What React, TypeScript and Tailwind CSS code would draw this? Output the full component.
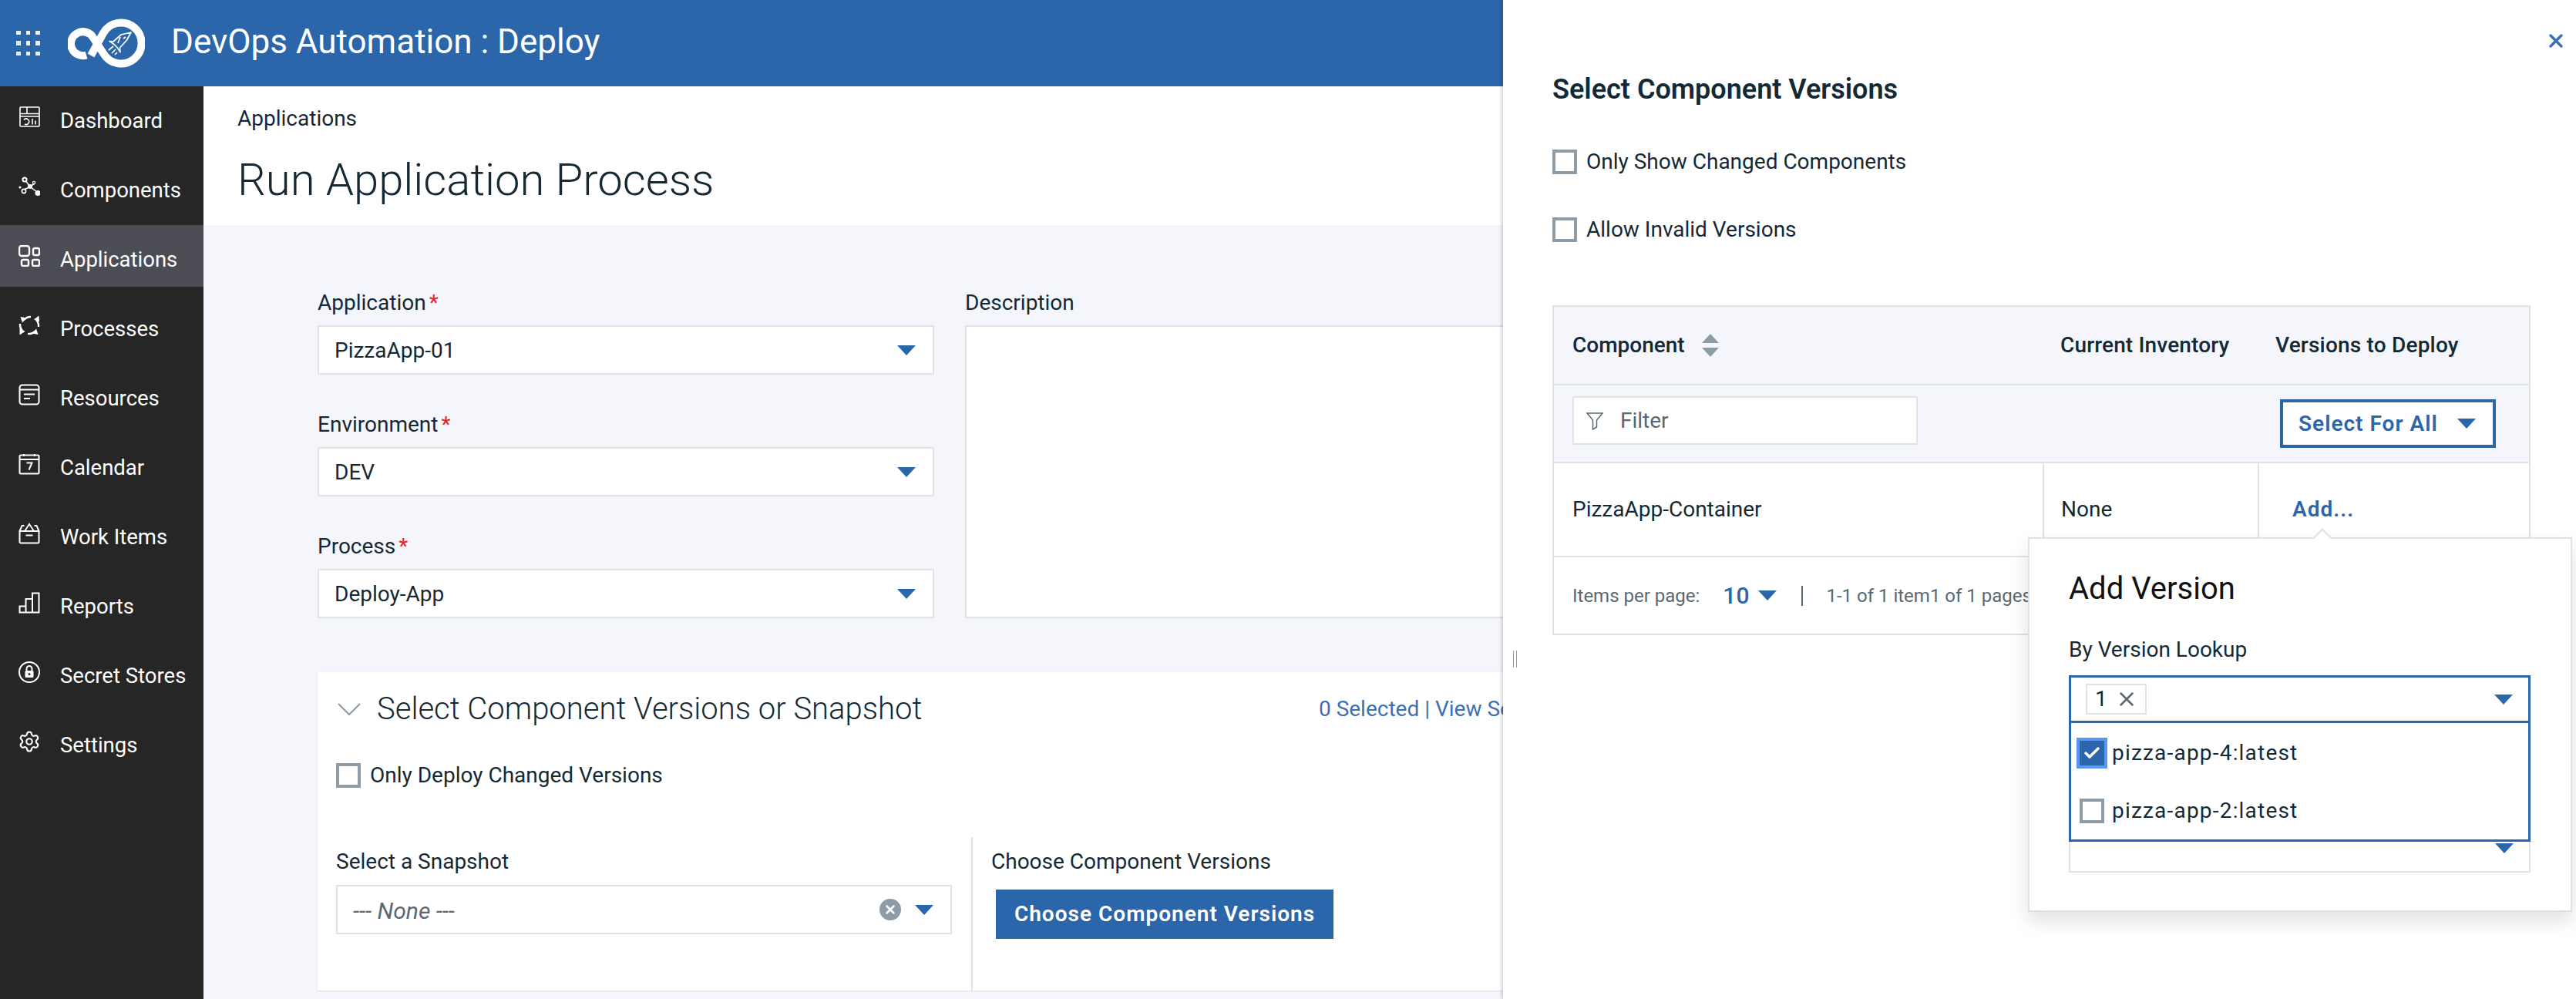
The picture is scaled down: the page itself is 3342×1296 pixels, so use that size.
import { Settings, X, Check } from "lucide-react";
import type { ReactNode } from "react";

const BLUE = "#2b65aa";

function Caret({ className = "" }: { className?: string }) {
	return (
		<svg viewBox="0 0 24 13" className={`w-[24px] h-[13px] shrink-0 ${className}`}>
			<polygon points="0,0 24,0 12,13" fill={BLUE} />
		</svg>
	);
}

function Box({ children }: { children: ReactNode }) {
	return (
		<svg viewBox="0 0 28 28" className="w-[28px] h-[28px] shrink-0 mb-[10px]" fill="none" stroke="currentColor" strokeWidth="2">
			{children}
		</svg>
	);
}

const navItems: { label: string; icon: ReactNode }[] = [
	{
		label: "Dashboard",
		icon: (
			<Box>
				<rect x="2" y="1" width="25" height="25" rx="1" strokeWidth="1.6" />
				<path d="M2 9.5h25M11 1v8.5M2 13h25" strokeWidth="1.6" />
				<path d="M7 17.5a3.7 3.7 0 1 1 1 5.5M18 16v7.5M22 18.5v5" strokeWidth="1.6" />
			</Box>
		),
	},
	{
		label: "Components",
		icon: (
			<Box>
				<path d="M8 5l7 9L4 20M15 14l10 8M15 14l6-4" strokeWidth="1.6" />
				<circle cx="15" cy="14" r="3" fill="currentColor" stroke="none" />
				<circle cx="8" cy="5" r="2.6" fill="#262626" />
				<circle cx="7" cy="20" r="2.6" fill="#262626" strokeWidth="1.6" />
				<circle cx="25" cy="22.5" r="3.5" fill="currentColor" stroke="none" />
				<circle cx="2" cy="15" r="1.6" fill="currentColor" stroke="none" />
				<circle cx="20" cy="9" r="1.6" fill="#262626" strokeWidth="1.2" />
			</Box>
		),
	},
	{
		label: "Applications",
		icon: (
			<Box>
				<rect x="1" y="1" width="13" height="13" rx="3" strokeWidth="2.4" />
				<rect x="19" y="4" width="8" height="9" rx="2" strokeWidth="2.4" />
				<rect x="4" y="19" width="9" height="8" rx="2" strokeWidth="2.4" />
				<rect x="18" y="19" width="9" height="8" rx="2" strokeWidth="2.4" />
			</Box>
		),
	},
	{
		label: "Processes",
		icon: (
			<Box>
				<path d="M7 7A12 12 0 0 1 16 3M23 7a12 12 0 0 1 3 9M21.500 22A12 12 0 0 1 12 25M5 21a12 12 0 0 1-3-9" strokeWidth="2.4" />
				<path d="M2.500 3l8 1.500L5 10.500zM26.500 1.500l-6.500 5 7 3zM25.500 26l-8-1.500 5.500-6zM1.500 26.500l7-4.500-7-4.500z" fill="currentColor" stroke="none" />
			</Box>
		),
	},
	{
		label: "Resources",
		icon: (
			<Box>
				<rect x="1.5" y="1.5" width="25" height="25" rx="3.5" />
				<path d="M1.5 7.5h25M7 13.5h14M7 19h8" />
			</Box>
		),
	},
	{
		label: "Calendar",
		icon: (
			<Box>
				<rect x="1.5" y="2.5" width="25" height="24" rx="1.5" />
				<path d="M1.5 8h25M7 1v3M21 1v3" />
				<path d="M10.5 12.5h7l-4 9" />
			</Box>
		),
	},
	{
		label: "Work Items",
		icon: (
			<Box>
				<path d="M1.5 11h25v14a1.5 1.5 0 0 1-1.5 1.5H3A1.5 1.5 0 0 1 1.5 25zM1.5 11l3-7h3M26.5 11l-3-7h-3M8 11l6-9 6 9M9.5 16.5h9" />
			</Box>
		),
	},
	{
		label: "Reports",
		icon: (
			<Box>
				<path d="M18 1.5h8.500v25H1.500v-8h8V9h8.500zM9.500 18.500v8M18 9v17.500" />
			</Box>
		),
	},
	{
		label: "Secret Stores",
		icon: (
			<Box>
				<circle cx="14" cy="14" r="13" />
				<rect x="8.500" y="12" width="11" height="9" rx="1.500" fill="currentColor" stroke="none" />
				<path d="M10.500 12V9.500a3.500 3.500 0 0 1 7 0V12" />
				<circle cx="14" cy="16.500" r="1.500" fill="#262626" stroke="none" />
			</Box>
		),
	},
	{
		label: "Settings",
		icon: <Settings className="w-[30px] h-[30px] shrink-0 mb-[10px] -ml-[1px] -mr-[1px]" strokeWidth={1.7} />,
	},
];

function Logo() {
	return (
		<svg viewBox="0 0 100 64" className="w-[100px] h-[64px] shrink-0" fill="none">
			<path d="M30 48L46 19A26.500 26.500 0 1 1 46 45L33 25A15.500 15.500 0 1 0 24 47.500" stroke="white" strokeWidth="10" />
			<path
				d="M82 18l-13 3-10 9-5-.5 6 4 4 4 4 6-.5-5.500 9-10zM68 24l-3 8M75 24l-3 2"
				stroke="white"
				strokeWidth="1.700"
				strokeLinejoin="round"
			/>
			<path d="M53 41l6-5M57 45l5-5M61 47l3-3" stroke="white" strokeWidth="1.700" />
		</svg>
	);
}

function AppGrid() {
	return (
		<div className="grid grid-cols-3 gap-x-[8px] gap-y-[8px] w-[30px] shrink-0">
			{Array.from({ length: 9 }).map((_, i) => (
				<span key={i} className="w-[5.5px] h-[5.500px] bg-white/90" />
			))}
		</div>
	);
}

function Field({ label, value }: { label: string; value: string }) {
	return (
		<div className="flex flex-col">
			<div className="h-[36px] mb-[13px] pt-[2px] text-[28px] leading-[36px]">
				{label}
				<span className="ml-[4px] text-[#e62325]">*</span>
			</div>
			<div className="h-[64px] bg-white border-2 border-[#dfe3e6] pl-[20px] pr-[22px] flex items-center justify-between text-[28px]">
				<span className="pt-[2px]">{value}</span>
				<Caret />
			</div>
		</div>
	);
}

function CheckboxRow({ label }: { label: string }) {
	return (
		<div className="flex items-center gap-[12px] text-[28px] leading-[32px]">
			<span className="w-[32px] h-[32px] border-4 border-[#8c9ba5] bg-white shrink-0" />
			<span>{label}</span>
		</div>
	);
}

function AddVersionPopover() {
	return (
		<div className="absolute left-[681px] top-[697px] w-[706px] h-[486px] bg-white border-2 border-[#dfe3e6] pl-[51px] pr-[52px] pt-[42px] shadow-[0_12px_24px_rgba(0,0,0,0.12)]">
			<span className="absolute left-[371px] -top-[10px] w-[18px] h-[18px] bg-white border-l-2 border-t-2 border-[#dfe3e6] rotate-45" />
			<div className="text-[40px] leading-[46px] text-[#111]">Add Version</div>
			<div className="mt-[38px] text-[28px] leading-[36px]">By Version Lookup</div>
			<div className="relative mt-[15px]">
				<div className="h-[62px] border-[3px] border-[#2b65aa] flex items-center justify-between pl-[19px] pr-[20px]">
					<span className="h-[40px] w-[79px] border-2 border-[#dfe3e6] flex items-center pl-[10px] gap-[10px] text-[28px]">
						1 <X className="w-[30px] h-[30px] text-[#5a6872]" strokeWidth={2} />
					</span>
					<Caret />
				</div>
				<div className="absolute left-0 right-0 top-[62px] h-[154px] bg-white border-[3px] border-t-0 border-[#2b65aa] z-10">
					<div className="h-[78px] flex items-center pl-[7px] gap-[6px] text-[28px] tracking-[1.2px]">
						<span className="w-[40px] h-[40px] border-4 border-[#5596f6] bg-[#2b65aa] flex items-center justify-center shrink-0">
							<Check className="w-[24px] h-[24px] text-white" strokeWidth={3.500} />
						</span>
						<span>pizza-app-4:latest</span>
					</div>
					<div className="h-[72px] flex items-center pl-[11px] gap-[10px] text-[28px] tracking-[1.2px]">
						<span className="w-[32px] h-[32px] border-4 border-[#8c9ba5] bg-white shrink-0" />
						<span>pizza-app-2:latest</span>
					</div>
				</div>
				<div className="mt-[130px] h-[64px] border-2 border-[#dfe3e6] flex items-center justify-end pr-[20px]">
					<Caret />
				</div>
			</div>
		</div>
	);
}

function ComponentVersionsPanel() {
	return (
		<section className="absolute left-[1950px] right-0 top-0 bottom-0 bg-white shadow-[-2px_0_4px_rgba(0,0,0,0.18)] pl-[64px] pr-[59px] pt-[96px] z-20">
			<X className="absolute left-[1352px] top-[39px] w-[28px] h-[28px] text-[#3d70b2]" strokeWidth={3} />
			<span className="absolute left-[13px] top-[844px] w-[5px] h-[22px] border-x border-[#8c9ba5]" />

			<h2 className="h-[40px] text-[36px] leading-[40px] font-semibold">Select Component Versions</h2>
			<div className="mt-[58px]">
				<CheckboxRow label="Only Show Changed Components" />
			</div>
			<div className="mt-[56px]">
				<CheckboxRow label="Allow Invalid Versions" />
			</div>

			<div className="mt-[82px] border-2 border-[#dfe3e6]">
				<div className="h-[102px] bg-[#f4f6fb] flex items-center font-medium text-[28px] border-b-2 border-[#dfe3e6]">
					<div className="w-[636px] pl-[24px] flex items-center gap-[22px]">
						Component
						<svg viewBox="0 0 22 30" className="w-[22px] h-[30px]">
							<polygon points="11,0 22,12 0,12" fill="#8c9ba5" />
							<polygon points="0,18 22,18 11,30" fill="#8c9ba5" />
						</svg>
					</div>
					<div className="w-[279px] pl-[21px] tracking-[0.15px]">Current Inventory</div>
					<div className="pl-[21px] tracking-[0.2px]">Versions to Deploy</div>
				</div>
				<div className="h-[101px] bg-[#f4f6fb] flex items-center justify-between pl-[24px] pr-[43px] border-b-2 border-[#dfe3e6]">
					<div className="w-[448px] h-[63px] mb-[8px] bg-white border-2 border-[#dfe3e6] flex items-center pl-[16px] gap-[22px] text-[28px] text-[#5a6872]">
						<svg viewBox="0 0 22 24" className="w-[22px] h-[24px]" fill="none" stroke="#5a6872" strokeWidth="1.500">
							<path d="M1 2h20l-7.500 9v9l-5 3V11z" />
						</svg>
						Filter
					</div>
					<button className="w-[280px] h-[63px] border-4 border-[#2b65aa] bg-white flex items-center pl-[20px] pr-[22px] justify-between text-[28px] font-semibold text-[#2b65aa] tracking-[1px]">
						Select For All
						<Caret />
					</button>
				</div>
				<div className="h-[122px] flex items-center text-[28px] border-b-2 border-[#dfe3e6]">
					<div className="w-[636px] h-full pl-[24px] flex items-center border-r-2 border-[#dfe3e6]">PizzaApp-Container</div>
					<div className="w-[279px] h-full pl-[22px] flex items-center border-r-2 border-[#dfe3e6]">None</div>
					<div className="pl-[43px] font-semibold text-[#2b65aa] tracking-[1px]">Add...</div>
				</div>
				<div className="h-[99px] pl-[24px] flex items-center text-[24px] text-[#5a6872] overflow-hidden whitespace-nowrap">
					Items per page:
					<span className="ml-[30px] text-[30px] font-medium text-[#2b65aa]">10</span>
					<Caret className="ml-[12px]" />
					<span className="ml-[32px] w-[2px] h-[26px] bg-[#5a6872]" />
					<span className="ml-[30px]">1-1 of 1 item1 of 1 pages</span>
				</div>
			</div>

			<AddVersionPopover />
		</section>
	);
}

export default function App() {
	return (
		<div className="relative h-[1296px] w-[3342px] overflow-hidden flex flex-col bg-[#f4f6fb] text-[#152935] [font-family:Roboto,sans-serif]">
			<header className="h-[112px] shrink-0 bg-[#2b65aa] flex items-center pl-[21px] text-white">
				<AppGrid />
				<div className="ml-[37px]">
					<Logo />
				</div>
				<div className="ml-[34px] mb-[4px] text-[44px]">DevOps Automation : Deploy</div>
			</header>

			<div className="flex flex-1 min-h-0">
				<aside className="w-[264px] shrink-0 bg-[#262626] text-white">
					{navItems.map((item) => (
						<div key={item.label} className="h-[90px]">
							<div className={`h-[80px] pt-[10px] pl-[24px] flex items-center gap-[26px] text-[27.5px] ${item.label === "Applications" ? "bg-[#4c4c55]" : ""}`}>
								{item.icon}
								<span>{item.label}</span>
							</div>
						</div>
					))}
				</aside>

				<main className="flex-1 min-w-0 flex flex-col">
					<div className="h-[180px] shrink-0 bg-white pl-[44px] pt-[25px]">
						<div className="text-[28px] leading-[34px]">Applications</div>
						<h1 className="mt-[26px] text-[58px] leading-[72px] font-light">Run Application Process</h1>
					</div>

					<div className="flex-1 pl-[148px] pt-[81px]">
						<div className="grid grid-cols-[800px_800px] gap-x-[40px]">
							<div className="flex flex-col gap-[45px]">
								<Field label="Application" value="PizzaApp-01" />
								<Field label="Environment" value="DEV" />
								<Field label="Process" value="Deploy-App" />
							</div>
							<div className="flex flex-col">
								<div className="h-[36px] mb-[13px] pt-[2px] text-[28px] leading-[36px]">Description</div>
								<div className="flex-1 bg-white border-2 border-[#dfe3e6]" />
							</div>
						</div>

						<div className="mt-[70px] w-[1641px] h-[413px] bg-white shadow-[0_1px_2px_rgba(0,0,0,0.1)] flex flex-col">
							<div className="h-[96px] flex items-center pl-[26px] pr-[16px]">
								<svg viewBox="0 0 30 17" className="w-[30px] h-[17px] shrink-0" fill="none" stroke="#8c9ba5" strokeWidth="2">
									<path d="M1 1l14 14L29 1" />
								</svg>
								<span className="ml-[21px] text-[40px] font-light">Select Component Versions or Snapshot</span>
								<span className="ml-auto text-[28px] text-[#3d70b2]">0 Selected | View Selected</span>
							</div>
							<div className="mt-[22px] pl-[24px]">
								<CheckboxRow label="Only Deploy Changed Versions" />
							</div>
							<div className="mt-[64px] flex flex-1">
								<div className="w-[850px] pl-[24px] pr-[25px] pt-[14px] border-r-2 border-[#dfe3e6]">
									<div className="h-[36px] text-[28px] leading-[36px]">Select a Snapshot</div>
									<div className="mt-[12px] h-[64px] border-2 border-[#dfe3e6] flex items-center pl-[20px] pr-[22px] text-[30px] italic text-[#5a6872]">
										<span className="pt-[2px]">--- None ---</span>
										<span className="ml-auto w-[28px] h-[28px] rounded-full bg-[#8c9ba5] flex items-center justify-center">
											<X className="w-[18px] h-[18px] text-white" strokeWidth={3.500} />
										</span>
										<Caret className="ml-[18px]" />
									</div>
								</div>
								<div className="pl-[24px] pt-[14px]">
									<div className="h-[36px] text-[28px] leading-[36px]">Choose Component Versions</div>
									<button className="mt-[18px] ml-[6px] w-[438px] h-[64px] bg-[#2b65aa] text-white text-[28px] font-semibold tracking-[1px]">
										Choose Component Versions
									</button>
								</div>
							</div>
						</div>
					</div>
				</main>
			</div>

			<ComponentVersionsPanel />
		</div>
	);
}
